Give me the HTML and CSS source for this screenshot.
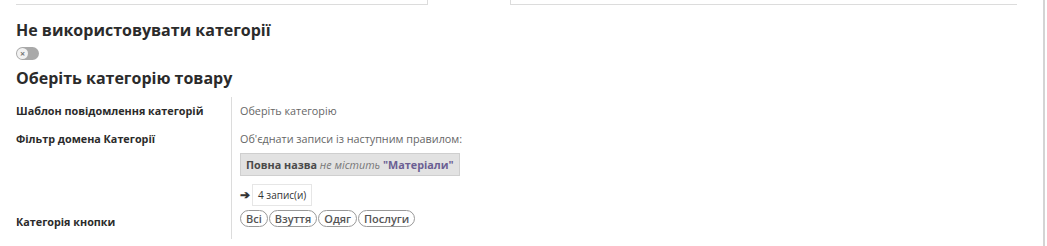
FILE: index.html
```html
<!DOCTYPE html>
<html lang="uk">
<head>
<meta charset="utf-8">
<link rel="stylesheet" href="styles.css">
</head>
<body>
<div class="page">
  <div class="topfields">
    <div class="field f1"></div>
    <div class="field f2"></div>
  </div>
  <div class="content">
    <h2 class="title">Не використовувати категорії</h2>
    <div class="toggle"><span class="knob">×</span></div>
    <h2 class="title t2">Оберіть категорію товару</h2>
    <div class="grid">
      <div class="label r1">Шаблон повідомлення категорій</div>
      <div class="value r1"><span class="muted">Оберіть категорію</span></div>
      <div class="label r2">Фільтр домена Категорії</div>
      <div class="value r2">
        <div class="muted">Об'єднати записи із наступним правилом:</div>
        <div class="domain"><b>Повна назва</b> <i>не містить</i> <b class="str">"Матеріали"</b></div>
        <div class="records"><span class="arrow">➔</span><span class="count">4 запис(и)</span></div>
      </div>
      <div class="label r3">Категорія кнопки</div>
      <div class="value r3">
        <div class="pills"><span class="pill">Всі</span><span class="pill">Взуття</span><span class="pill">Одяг</span><span class="pill">Послуги</span></div>
      </div>
    </div>
  </div>
</div>
</body>
</html>
```
FILE: styles.css
```css
html, body {
  margin: 0;
  padding: 0;
  background: #fff;
}
body {
  font-family: "Open Sans", "Noto Sans", sans-serif;
  color: #212529;
}
.page {
  width: 1043px;
  height: 246px;
  border-right: 2px solid #d4d4d4;
  overflow: hidden;
}
.topfields {
  display: flex;
  height: 5px;
}
.field {
  height: 4px;
  border-bottom: 1px solid #dcdcdc;
}
.f1 {
  margin-left: 16px;
  width: 411px;
  border-right: 1px solid #dcdcdc;
}
.f2 {
  margin-left: 82px;
  width: 506px;
  border-left: 1px solid #dcdcdc;
}
.content {
  padding: 0 0 0 16px;
}
.title {
  margin: 14px 0 0 0;
  font-size: 16px;
  font-weight: 700;
  line-height: 22px;
  color: #2b2b2b;
}
.t2 {
  margin-top: 7px;
}
.toggle {
  margin-top: 6px;
  width: 23px;
  height: 13px;
  border-radius: 7px;
  background: #a9a9a9;
  position: relative;
}
.knob {
  position: absolute;
  left: 1px;
  top: 1px;
  width: 11px;
  height: 11px;
  border-radius: 50%;
  background: #f2f2f2;
  color: #777;
  font-size: 9px;
  line-height: 11px;
  text-align: center;
  font-weight: 700;
}
.grid {
  margin-top: 8px;
  display: grid;
  grid-template-columns: 215px 1fr;
}
.label {
  font-size: 10.8px;
  font-weight: 700;
  line-height: 18px;
  padding: 6px 0 2px 0;
  color: #2b2b2b;
}
.value {
  border-left: 1px solid #dcdcdc;
  padding: 6px 0 2px 8px;
  font-size: 10.8px;
  line-height: 18px;
  color: #212529;
}
.muted {
  color: #666;
}
.r1 { padding-top: 5px; }
.r2 { padding-top: 8px; }
.domain {
  display: inline-block;
  margin-top: 5px;
  padding: 2px 5px 2px 5px;
  background: #e2e2e2;
  border: 1px solid #cfcfcf;
  font-size: 10.8px;
  line-height: 17px;
  color: #444;
}
.domain b { font-weight: 700; color: #4a4a4a; }
.domain i { color: #777; }
.domain .str { color: #6b5f93; }
.records {
  margin-top: 8px;
  display: flex;
  align-items: center;
  gap: 1px;
}
.arrow {
  font-size: 12px;
  font-weight: 700;
  color: #333;
  width: 11px;
}
.count {
  border: 1px solid #e6e6e6;
  padding: 1px 5px;
  font-size: 10px;
  line-height: 18px;
  color: #333;
}
.r3 { padding-top: 2px; padding-bottom: 8px; }
.label.r3 { padding-top: 5px; }
.pills {
  display: flex;
  gap: 1px;
}
.pill {
  border: 1px solid #999;
  border-radius: 9px;
  padding: 0 5px;
  font-size: 11px;
  font-weight: 600;
  line-height: 15px;
  color: #555;
}
```
